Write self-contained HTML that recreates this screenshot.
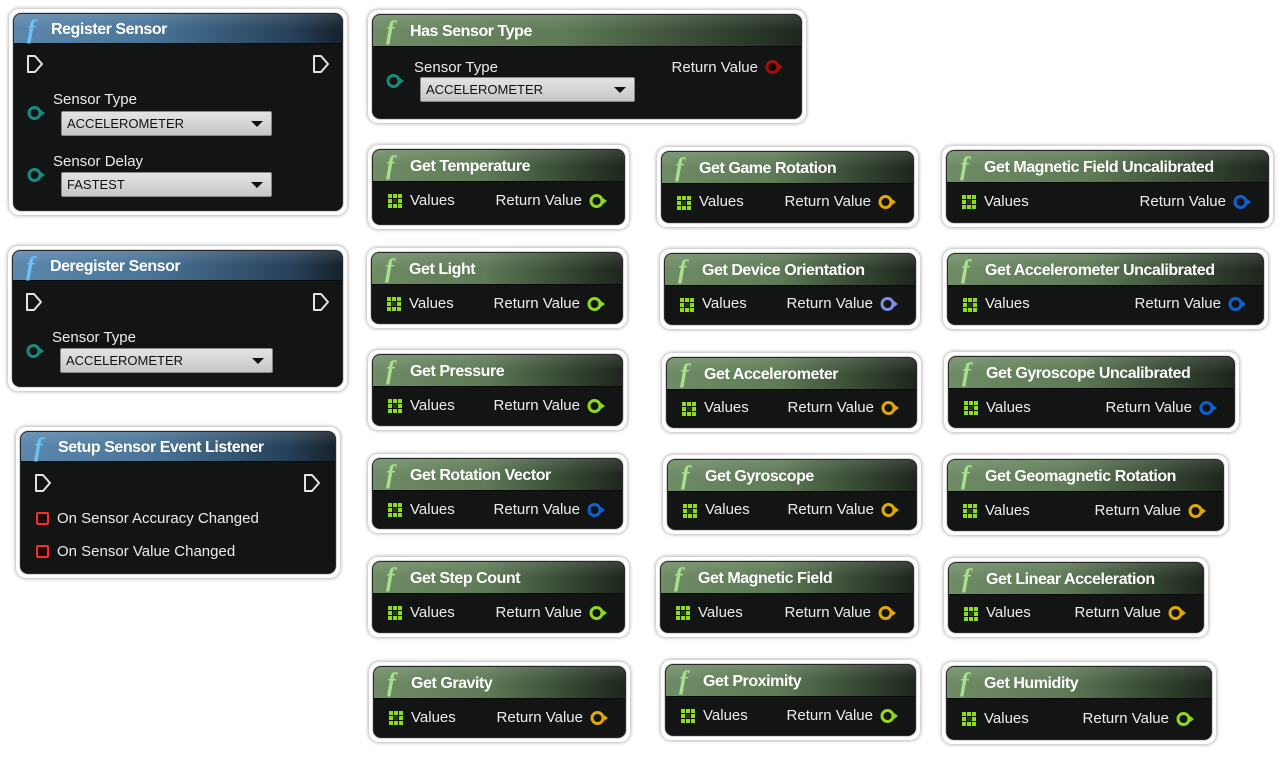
<!DOCTYPE html>
<html><head><meta charset="utf-8"><style>
*{box-sizing:border-box;margin:0;padding:0}
body{width:1280px;height:758px;background:#fff;position:relative;overflow:hidden;font-family:"Liberation Sans",sans-serif}
.n{position:absolute;background:#fff;border-radius:10px;box-shadow:0 0 3px 1px rgba(0,0,0,.28)}
.i{position:absolute;left:5px;top:5px;right:5px;bottom:5px;background:#131514;border-radius:7px;overflow:hidden;box-shadow:0 0 1px 1px #000}
.h{position:absolute;left:0;top:0;right:0;height:32px;color:#fff;font-weight:bold;font-size:16px;letter-spacing:-0.45px;line-height:33px;padding-left:37px;border-bottom:1px solid #0a0a0a;white-space:nowrap}
.g .h{background:linear-gradient(180deg,rgba(255,255,255,.12),rgba(0,0,0,0) 50%),linear-gradient(90deg,#6f8c66 0%,#5e7a56 45%,#2e3d2c 85%,#1e261d 100%)}
.b .h{height:30px;line-height:31px;background:linear-gradient(180deg,rgba(255,255,255,.12),rgba(0,0,0,0) 50%),linear-gradient(90deg,#5b87ad 0%,#4b7699 40%,#264058 85%,#16222e 100%)}
.fi{position:absolute;left:13px;top:1px;font-family:"Liberation Serif",serif;font-style:italic;font-weight:bold;font-size:26px;line-height:30px;letter-spacing:0}
.g .fi{color:#a8e08c}.b .fi{color:#6cc0f4}
.t{position:absolute;color:#ececec;font-size:15px;line-height:18px;white-space:nowrap}
.rv{right:42px}
.pin{position:absolute;width:20px;height:16px}
.grid{position:absolute;left:15px;top:44px;width:14px;height:14px}
.dd{position:absolute;height:25px;background:linear-gradient(#e4e4e4,#c6c6c6);border:1px solid #888;border-radius:2px;font-size:13px;color:#111;line-height:23px;padding-left:5px}
.dd:after{content:"";position:absolute;right:8px;top:9px;border-left:6px solid transparent;border-right:6px solid transparent;border-top:6px solid #111}
.ex{position:absolute;width:18px;height:20px}
.sq{position:absolute;left:15px;width:13px;height:13px;border:2px solid #f03030;background:#200;border-radius:2px}
</style></head><body>
<svg width="0" height="0" style="position:absolute">
<defs>
<symbol id="gr" viewBox="0 0 14 14"><g fill="#8fdc1c"><rect x="0" y="0" width="4" height="4"/><rect x="5" y="0" width="4" height="4"/><rect x="10" y="0" width="4" height="4"/><rect x="0" y="5" width="4" height="4"/><rect x="10" y="5" width="4" height="4"/><rect x="0" y="10" width="4" height="4"/><rect x="5" y="10" width="4" height="4"/><rect x="10" y="10" width="4" height="4"/></g><rect x="5" y="5" width="4" height="4" fill="#2a4010"/></symbol>
<symbol id="ex" viewBox="0 0 18 20"><path d="M2 2 H9 L16 10 L9 18 H2 Z" fill="none" stroke="#e4e4e4" stroke-width="2" stroke-linejoin="round"/></symbol>
<symbol id="pG" viewBox="0 0 20 16"><circle cx="7.5" cy="8" r="5.5" fill="none" stroke="#8fd81c" stroke-width="3"/><path d="M14 5 L18 8 L14 11Z" fill="#8fd81c"/></symbol>
<symbol id="pY" viewBox="0 0 20 16"><circle cx="7.5" cy="8" r="5.5" fill="none" stroke="#e0a800" stroke-width="3"/><path d="M14 5 L18 8 L14 11Z" fill="#e0a800"/></symbol>
<symbol id="pB" viewBox="0 0 20 16"><circle cx="7.5" cy="8" r="5.5" fill="none" stroke="#1060d0" stroke-width="3"/><path d="M14 5 L18 8 L14 11Z" fill="#1060d0"/></symbol>
<symbol id="pL" viewBox="0 0 20 16"><circle cx="7.5" cy="8" r="5.5" fill="none" stroke="#7f8ee0" stroke-width="3"/><path d="M14 5 L18 8 L14 11Z" fill="#7f8ee0"/></symbol>
<symbol id="pT" viewBox="0 0 20 16"><circle cx="7.5" cy="8" r="5.5" fill="none" stroke="#1a8a80" stroke-width="3"/><path d="M14 5 L18 8 L14 11Z" fill="#1a8a80"/></symbol>
<symbol id="pR" viewBox="0 0 20 16"><circle cx="7.5" cy="8" r="5.5" fill="#200" stroke="#a01010" stroke-width="3"/><path d="M14 5 L18 8 L14 11Z" fill="#a01010"/></symbol>
</defs></svg>

<!-- Register Sensor -->
<div class="n b" style="left:9px;top:9px;width:338px;height:206px"><div class="i">
<div class="h"><span class="fi">f</span>Register Sensor</div>
<svg class="ex" style="left:12px;top:40px"><use href="#ex"/></svg>
<svg class="ex" style="right:12px;top:40px"><use href="#ex"/></svg>
<div class="t" style="left:39px;top:77px">Sensor Type</div>
<svg class="pin" style="left:13px;top:91px"><use href="#pT"/></svg>
<div class="dd" style="left:47px;top:97px;width:211px">ACCELEROMETER</div>
<div class="t" style="left:39px;top:139px">Sensor Delay</div>
<svg class="pin" style="left:13px;top:153px"><use href="#pT"/></svg>
<div class="dd" style="left:47px;top:158px;width:211px">FASTEST</div>
</div></div>

<!-- Deregister Sensor -->
<div class="n b" style="left:8px;top:246px;width:339px;height:145px"><div class="i">
<div class="h"><span class="fi">f</span>Deregister Sensor</div>
<svg class="ex" style="left:12px;top:41px"><use href="#ex"/></svg>
<svg class="ex" style="right:12px;top:41px"><use href="#ex"/></svg>
<div class="t" style="left:39px;top:78px">Sensor Type</div>
<svg class="pin" style="left:13px;top:92px"><use href="#pT"/></svg>
<div class="dd" style="left:47px;top:97px;width:213px">ACCELEROMETER</div>
</div></div>

<!-- Setup Sensor Event Listener -->
<div class="n b" style="left:16px;top:427px;width:324px;height:151px"><div class="i">
<div class="h"><span class="fi">f</span>Setup Sensor Event Listener</div>
<svg class="ex" style="left:13px;top:41px"><use href="#ex"/></svg>
<svg class="ex" style="right:14px;top:41px"><use href="#ex"/></svg>
<div class="sq" style="top:80px"></div><div class="t" style="left:36px;top:78px">On Sensor Accuracy Changed</div>
<div class="sq" style="top:113px"></div><div class="t" style="left:36px;top:111px">On Sensor Value Changed</div>
</div></div>

<!-- Has Sensor Type -->
<div class="n g" style="left:368px;top:10px;width:438px;height:113px"><div class="i">
<div class="h"><span class="fi">f</span>Has Sensor Type</div>
<div class="t" style="left:41px;top:44px">Sensor Type</div>
<div class="t" style="right:43px;top:44px">Return Value</div>
<svg class="pin" style="right:16px;top:44px"><use href="#pR"/></svg>
<svg class="pin" style="left:13px;top:58px"><use href="#pT"/></svg>
<div class="dd" style="left:47px;top:62px;width:215px">ACCELEROMETER</div>
</div></div>

<!-- Getter nodes -->
<div class="n g" style="left:368px;top:145px;width:261px;height:84px"><div class="i"><div class="h"><span class="fi">f</span>Get Temperature</div><svg class="grid"><use href="#gr"/></svg><div class="t" style="left:37px;top:42px">Values</div><div class="t rv" style="top:42px">Return Value</div><svg class="pin" style="right:15px;top:43px"><use href="#pG"/></svg></div></div>
<div class="n g" style="left:367px;top:248px;width:260px;height:80px"><div class="i"><div class="h"><span class="fi">f</span>Get Light</div><svg class="grid"><use href="#gr"/></svg><div class="t" style="left:37px;top:42px">Values</div><div class="t rv" style="top:42px">Return Value</div><svg class="pin" style="right:15px;top:43px"><use href="#pG"/></svg></div></div>
<div class="n g" style="left:368px;top:350px;width:259px;height:80px"><div class="i"><div class="h"><span class="fi">f</span>Get Pressure</div><svg class="grid"><use href="#gr"/></svg><div class="t" style="left:37px;top:42px">Values</div><div class="t rv" style="top:42px">Return Value</div><svg class="pin" style="right:15px;top:43px"><use href="#pG"/></svg></div></div>
<div class="n g" style="left:368px;top:454px;width:259px;height:79px"><div class="i"><div class="h"><span class="fi">f</span>Get Rotation Vector</div><svg class="grid"><use href="#gr"/></svg><div class="t" style="left:37px;top:42px">Values</div><div class="t rv" style="top:42px">Return Value</div><svg class="pin" style="right:15px;top:43px"><use href="#pB"/></svg></div></div>
<div class="n g" style="left:368px;top:557px;width:261px;height:80px"><div class="i"><div class="h"><span class="fi">f</span>Get Step Count</div><svg class="grid"><use href="#gr"/></svg><div class="t" style="left:37px;top:42px">Values</div><div class="t rv" style="top:42px">Return Value</div><svg class="pin" style="right:15px;top:43px"><use href="#pG"/></svg></div></div>
<div class="n g" style="left:369px;top:662px;width:261px;height:80px"><div class="i"><div class="h"><span class="fi">f</span>Get Gravity</div><svg class="grid"><use href="#gr"/></svg><div class="t" style="left:37px;top:42px">Values</div><div class="t rv" style="top:42px">Return Value</div><svg class="pin" style="right:15px;top:43px"><use href="#pY"/></svg></div></div>

<div class="n g" style="left:657px;top:147px;width:261px;height:80px"><div class="i"><div class="h"><span class="fi">f</span>Get Game Rotation</div><svg class="grid"><use href="#gr"/></svg><div class="t" style="left:37px;top:41px">Values</div><div class="t rv" style="top:41px">Return Value</div><svg class="pin" style="right:15px;top:42px"><use href="#pY"/></svg></div></div>
<div class="n g" style="left:660px;top:249px;width:260px;height:80px"><div class="i"><div class="h"><span class="fi">f</span>Get Device Orientation</div><svg class="grid"><use href="#gr"/></svg><div class="t" style="left:37px;top:41px">Values</div><div class="t rv" style="top:41px">Return Value</div><svg class="pin" style="right:15px;top:42px"><use href="#pL"/></svg></div></div>
<div class="n g" style="left:662px;top:353px;width:259px;height:79px"><div class="i"><div class="h"><span class="fi">f</span>Get Accelerometer</div><svg class="grid"><use href="#gr"/></svg><div class="t" style="left:37px;top:41px">Values</div><div class="t rv" style="top:41px">Return Value</div><svg class="pin" style="right:15px;top:42px"><use href="#pY"/></svg></div></div>
<div class="n g" style="left:663px;top:455px;width:258px;height:79px"><div class="i"><div class="h"><span class="fi">f</span>Get Gyroscope</div><svg class="grid"><use href="#gr"/></svg><div class="t" style="left:37px;top:41px">Values</div><div class="t rv" style="top:41px">Return Value</div><svg class="pin" style="right:15px;top:42px"><use href="#pY"/></svg></div></div>
<div class="n g" style="left:656px;top:557px;width:262px;height:80px"><div class="i"><div class="h"><span class="fi">f</span>Get Magnetic Field</div><svg class="grid"><use href="#gr"/></svg><div class="t" style="left:37px;top:42px">Values</div><div class="t rv" style="top:42px">Return Value</div><svg class="pin" style="right:15px;top:43px"><use href="#pY"/></svg></div></div>
<div class="n g" style="left:661px;top:660px;width:259px;height:80px"><div class="i"><div class="h"><span class="fi">f</span>Get Proximity</div><svg class="grid"><use href="#gr"/></svg><div class="t" style="left:37px;top:42px">Values</div><div class="t rv" style="top:42px">Return Value</div><svg class="pin" style="right:15px;top:43px"><use href="#pG"/></svg></div></div>

<div class="n g" style="left:942px;top:146px;width:331px;height:81px"><div class="i"><div class="h"><span class="fi">f</span>Get Magnetic Field Uncalibrated</div><svg class="grid"><use href="#gr"/></svg><div class="t" style="left:37px;top:42px">Values</div><div class="t rv" style="top:42px">Return Value</div><svg class="pin" style="right:15px;top:43px"><use href="#pB"/></svg></div></div>
<div class="n g" style="left:943px;top:249px;width:325px;height:80px"><div class="i"><div class="h"><span class="fi">f</span>Get Accelerometer Uncalibrated</div><svg class="grid"><use href="#gr"/></svg><div class="t" style="left:37px;top:41px">Values</div><div class="t rv" style="top:41px">Return Value</div><svg class="pin" style="right:15px;top:42px"><use href="#pB"/></svg></div></div>
<div class="n g" style="left:944px;top:352px;width:295px;height:80px"><div class="i"><div class="h"><span class="fi">f</span>Get Gyroscope Uncalibrated</div><svg class="grid"><use href="#gr"/></svg><div class="t" style="left:37px;top:42px">Values</div><div class="t rv" style="top:42px">Return Value</div><svg class="pin" style="right:15px;top:43px"><use href="#pB"/></svg></div></div>
<div class="n g" style="left:943px;top:455px;width:285px;height:80px"><div class="i"><div class="h"><span class="fi">f</span>Get Geomagnetic Rotation</div><svg class="grid"><use href="#gr"/></svg><div class="t" style="left:37px;top:42px">Values</div><div class="t rv" style="top:42px">Return Value</div><svg class="pin" style="right:15px;top:43px"><use href="#pY"/></svg></div></div>
<div class="n g" style="left:944px;top:558px;width:264px;height:79px"><div class="i"><div class="h"><span class="fi">f</span>Get Linear Acceleration</div><svg class="grid"><use href="#gr"/></svg><div class="t" style="left:37px;top:41px">Values</div><div class="t rv" style="top:41px">Return Value</div><svg class="pin" style="right:15px;top:42px"><use href="#pY"/></svg></div></div>
<div class="n g" style="left:942px;top:662px;width:274px;height:82px"><div class="i"><div class="h"><span class="fi">f</span>Get Humidity</div><svg class="grid" style="top:45px"><use href="#gr"/></svg><div class="t" style="left:37px;top:43px">Values</div><div class="t rv" style="top:43px">Return Value</div><svg class="pin" style="right:15px;top:44px"><use href="#pG"/></svg></div></div>
</body></html>
